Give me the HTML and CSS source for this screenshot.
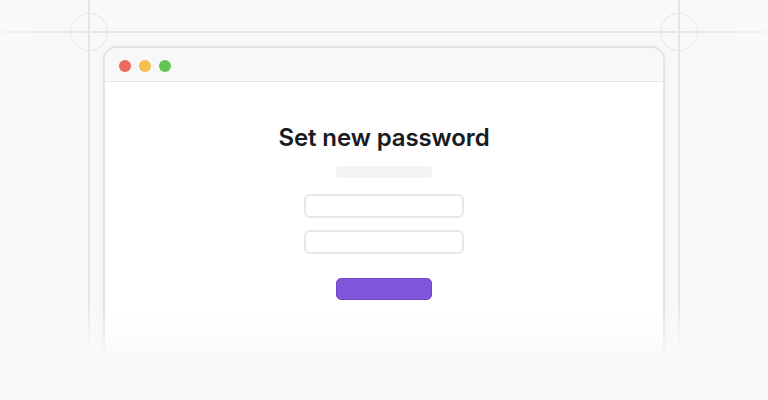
FILE: index.html
```html
<!DOCTYPE html>
<html lang="en">
<head>
<meta charset="utf-8">
<title>Set new password</title>
<link rel="stylesheet" href="styles.css">
</head>
<body>
<div class="canvas">
  <div class="guide guide-h"></div>
  <div class="guide guide-v guide-v-left"></div>
  <div class="guide guide-v guide-v-right"></div>
  <div class="ring ring-left"></div>
  <div class="ring ring-right"></div>

  <div class="window">
    <div class="titlebar">
      <span class="dot dot-red"></span>
      <span class="dot dot-yellow"></span>
      <span class="dot dot-green"></span>
    </div>
    <div class="content">
      <h1 class="title">Set new password</h1>
      <div class="subtitle-bar"></div>
      <div class="field"></div>
      <div class="field field-second"></div>
      <div class="button"></div>
    </div>
  </div>

  <div class="fade"></div>
</div>
</body>
</html>
```

FILE: styles.css
```css
* { box-sizing: border-box; }

html, body {
  margin: 0;
  padding: 0;
}

body {
  background: #f9f9f9;
  font-family: Inter, "Noto Sans", "Liberation Sans", sans-serif;
  width: 768px;
  height: 400px;
  overflow: hidden;
}

.canvas {
  position: relative;
  width: 768px;
  height: 400px;
  padding-top: 46px;
  padding-left: 103px;
  overflow: hidden;
}

.guide {
  position: absolute;
  background: #e6e6e6;
}

.guide-h {
  left: 0;
  top: 31px;
  width: 768px;
  height: 2px;
  background: linear-gradient(to right, rgba(230,230,230,0.3) 0, #e6e6e6 90px, #e6e6e6 680px, rgba(230,230,230,0.3) 768px);
}

.guide-v {
  top: 0;
  width: 2px;
  height: 380px;
  background: linear-gradient(to bottom, #e6e6e6 0, #e6e6e6 300px, rgba(230,230,230,0) 380px);
}

.guide-v-left { left: 88px; }
.guide-v-right { left: 678px; }

.ring {
  position: absolute;
  top: 13px;
  width: 38px;
  height: 38px;
  border: 1.5px solid #e8e8e8;
  border-radius: 50%;
}

.ring-left { left: 70px; }
.ring-right { left: 660px; }

.window {
  position: relative;
  width: 562px;
  height: 354px;
  background: #ffffff;
  border: 2px solid #e4e4e4;
  border-bottom: 0;
  border-radius: 14px 14px 0 0;
  box-shadow: 0 0 10px rgba(0, 0, 0, 0.04);
  overflow: hidden;
}

.titlebar {
  height: 34px;
  background: #f8f8f8;
  border-bottom: 1.5px solid #e6e6e6;
  display: flex;
  align-items: center;
  gap: 8px;
  padding: 3px 0 0 14px;
}

.dot {
  width: 12px;
  height: 12px;
  border-radius: 50%;
}

.dot-red { background: #ee6a5f; }
.dot-yellow { background: #f5be4f; }
.dot-green { background: #62c454; }

.content {
  display: flex;
  flex-direction: column;
  align-items: center;
  padding-top: 41px;
}

.title {
  margin: 0;
  font-size: 24px;
  line-height: 29px;
  font-weight: 600;
  color: #181b22;
  letter-spacing: -0.1px;
}

.subtitle-bar {
  margin-top: 14px;
  width: 96px;
  height: 12px;
  border-radius: 4px;
  background: #f3f3f3;
}

.field {
  margin-top: 16px;
  width: 160px;
  height: 24px;
  border: 2px solid #e7e7e7;
  border-radius: 6px;
  background: #ffffff;
}

.field-second {
  margin-top: 12px;
}

.button {
  margin-top: 24px;
  width: 96px;
  height: 22px;
  border-radius: 5px;
  background: #8056da;
  border: 1px solid #7048c8;
}

.fade {
  position: absolute;
  left: 0;
  top: 310px;
  width: 768px;
  height: 90px;
  background: linear-gradient(to bottom, rgba(249,249,249,0) 0, rgba(249,249,249,0.85) 45px, #f9f9f9 75px);
  pointer-events: none;
}
```
